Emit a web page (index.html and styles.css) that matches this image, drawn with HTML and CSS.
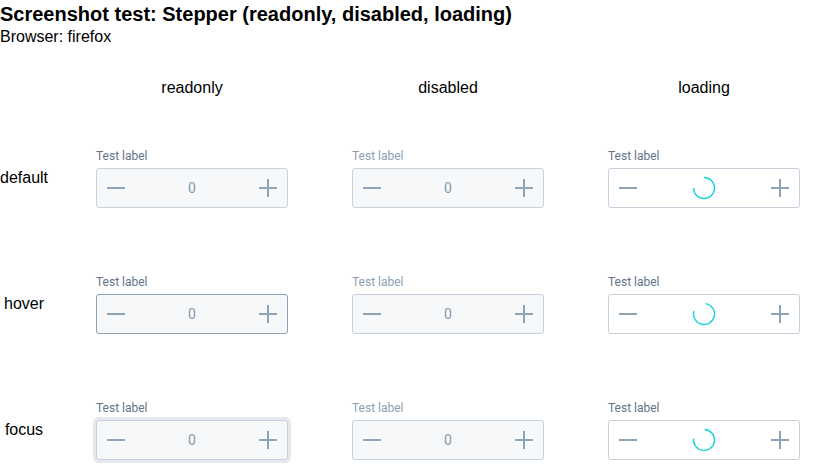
FILE: index.html
```html
<!DOCTYPE html>
<html>
<head>
<meta charset="utf-8">
<link rel="stylesheet" href="styles.css">
</head>
<body>
<h1 class="title">Screenshot test: Stepper (readonly, disabled, loading)</h1>
<p class="browser">Browser: firefox</p>
<div class="grid">
  <div class="corner"></div>
  <div class="colhead"><span class="colhead-text">readonly</span></div>
  <div class="colhead"><span class="colhead-text">disabled</span></div>
  <div class="colhead"><span class="colhead-text">loading</span></div>

  <div class="rowhead">default</div>
  <div class="cell"><div class="field"><span class="label">Test label</span><div class="stepper"><span class="btn"><svg viewBox="0 0 24 24"><path d="M3 12h18"/></svg></span><span class="value">0</span><span class="btn"><svg viewBox="0 0 24 24"><path d="M3 12h18M12 3v18"/></svg></span></div></div></div>
  <div class="cell"><div class="field"><span class="label label-disabled">Test label</span><div class="stepper"><span class="btn"><svg viewBox="0 0 24 24"><path d="M3 12h18"/></svg></span><span class="value">0</span><span class="btn"><svg viewBox="0 0 24 24"><path d="M3 12h18M12 3v18"/></svg></span></div></div></div>
  <div class="cell"><div class="field"><span class="label">Test label</span><div class="stepper stepper-loading"><span class="btn"><svg viewBox="0 0 24 24"><path d="M3 12h18"/></svg></span><span class="value"><svg class="spinner" viewBox="0 0 24 24"><path d="M12 1.5A10.5 10.5 0 1 1 1.5 12"/></svg></span><span class="btn"><svg viewBox="0 0 24 24"><path d="M3 12h18M12 3v18"/></svg></span></div></div></div>

  <div class="rowhead">hover</div>
  <div class="cell"><div class="field"><span class="label">Test label</span><div class="stepper stepper-hover"><span class="btn"><svg viewBox="0 0 24 24"><path d="M3 12h18"/></svg></span><span class="value">0</span><span class="btn"><svg viewBox="0 0 24 24"><path d="M3 12h18M12 3v18"/></svg></span></div></div></div>
  <div class="cell"><div class="field"><span class="label label-disabled">Test label</span><div class="stepper"><span class="btn"><svg viewBox="0 0 24 24"><path d="M3 12h18"/></svg></span><span class="value">0</span><span class="btn"><svg viewBox="0 0 24 24"><path d="M3 12h18M12 3v18"/></svg></span></div></div></div>
  <div class="cell"><div class="field"><span class="label">Test label</span><div class="stepper stepper-loading"><span class="btn"><svg viewBox="0 0 24 24"><path d="M3 12h18"/></svg></span><span class="value"><svg class="spinner" viewBox="0 0 24 24"><path d="M13.5 1.6A10.5 10.5 0 1 1 2 9"/></svg></span><span class="btn"><svg viewBox="0 0 24 24"><path d="M3 12h18M12 3v18"/></svg></span></div></div></div>

  <div class="rowhead">focus</div>
  <div class="cell"><div class="field"><span class="label">Test label</span><div class="stepper stepper-focus"><span class="btn"><svg viewBox="0 0 24 24"><path d="M3 12h18"/></svg></span><span class="value">0</span><span class="btn"><svg viewBox="0 0 24 24"><path d="M3 12h18M12 3v18"/></svg></span></div></div></div>
  <div class="cell"><div class="field"><span class="label label-disabled">Test label</span><div class="stepper"><span class="btn"><svg viewBox="0 0 24 24"><path d="M3 12h18"/></svg></span><span class="value">0</span><span class="btn"><svg viewBox="0 0 24 24"><path d="M3 12h18M12 3v18"/></svg></span></div></div></div>
  <div class="cell"><div class="field"><span class="label">Test label</span><div class="stepper stepper-loading"><span class="btn"><svg viewBox="0 0 24 24"><path d="M3 12h18"/></svg></span><span class="value"><svg class="spinner" viewBox="0 0 24 24"><path d="M12.5 1.5A10.5 10.5 0 1 1 1.6 10.5"/></svg></span><span class="btn"><svg viewBox="0 0 24 24"><path d="M3 12h18M12 3v18"/></svg></span></div></div></div>
</div>
</body>
</html>
```

FILE: styles.css
```css
html, body {
  margin: 0;
  padding: 0;
  overflow: hidden;
  background: #ffffff;
  color: #000000;
  font-family: "Liberation Sans", Arial, sans-serif;
}

.title {
  margin: 0;
  font-size: 20px;
  font-weight: bold;
  line-height: 28px;
}

.browser {
  margin: 0;
  font-size: 16px;
  line-height: 18px;
}

.grid {
  margin-top: 15px;
  display: grid;
  grid-template-columns: 64px 256px 256px 241px;
  grid-template-rows: 54px 126px 126px 126px;
}

.colhead {
  display: flex;
  align-items: center;
  padding-left: 32px;
  font-size: 16px;
}

.colhead-text {
  width: 192px;
  text-align: center;
}

.rowhead {
  display: flex;
  align-items: center;
  justify-content: center;
  padding-right: 16px;
  font-size: 16px;
}

.cell {
  display: flex;
  align-items: center;
  padding-left: 32px;
}

.field {
  display: flex;
  flex-direction: column;
  width: 192px;
  font-family: Roboto, "Noto Sans", sans-serif;
}

.label {
  font-size: 12px;
  line-height: 16px;
  color: #5f7389;
  margin-bottom: 4px;
}

.label-disabled {
  color: #8d9fb3;
}

.stepper {
  box-sizing: border-box;
  height: 40px;
  display: flex;
  align-items: center;
  justify-content: space-between;
  background: #f6f8fa;
  border: 1px solid #c6d1dc;
  border-radius: 3px;
}

.stepper-hover {
  border-color: #8ea2b8;
}

.stepper-focus {
  box-shadow: 0 0 0 3px #e3e9ef;
}

.stepper-loading {
  background: #ffffff;
}

.btn {
  width: 38px;
  height: 38px;
  display: flex;
  align-items: center;
  justify-content: center;
}

.btn svg {
  width: 24px;
  height: 24px;
  fill: none;
  stroke: #8fa3b8;
  stroke-width: 2;
}

.value {
  font-size: 14px;
  color: #8799ae;
  display: flex;
  align-items: center;
  justify-content: center;
}

.spinner {
  width: 24px;
  height: 24px;
  fill: none;
  stroke: #1dd3e0;
  stroke-width: 1.4;
}
```
